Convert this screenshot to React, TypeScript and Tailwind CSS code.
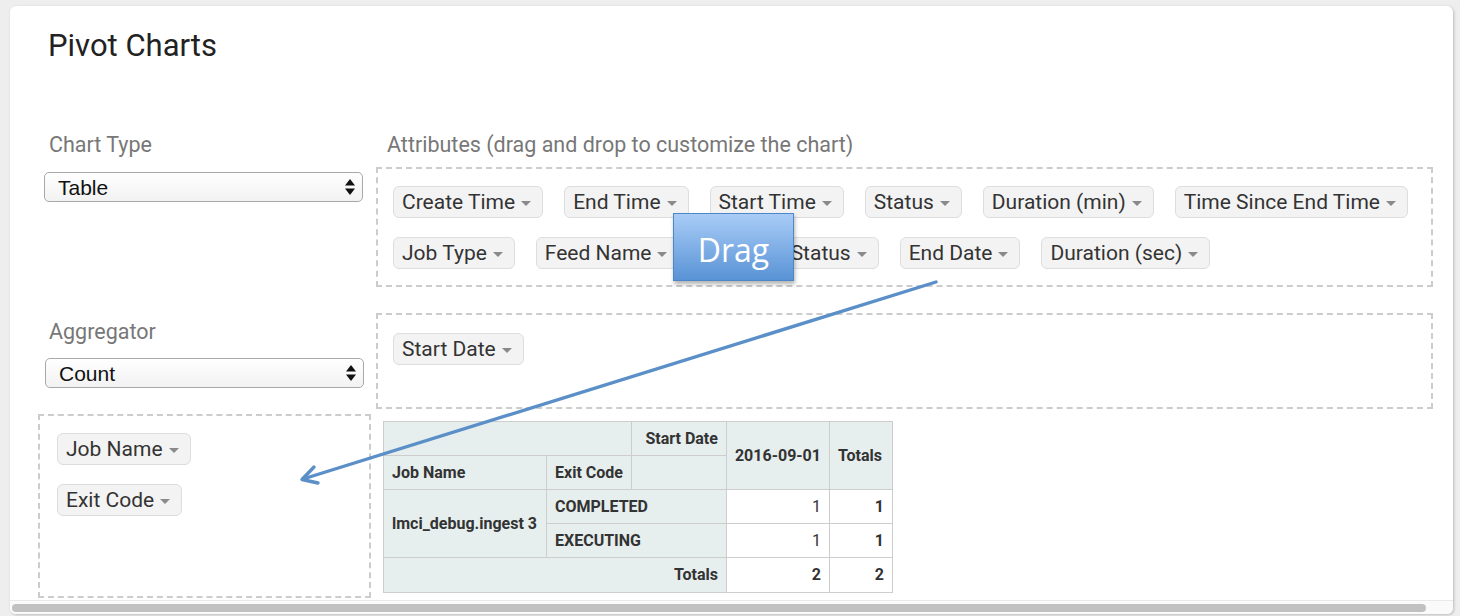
import React from "react";

const font = { fontFamily: "Roboto, 'Liberation Sans', sans-serif" };

function Chip({ label }: { label: string }) {
  return (
    <div className="flex h-[32px] shrink-0 items-center whitespace-nowrap rounded-[6px] border border-[#dddddd] bg-[#f3f3f3] pl-[8px] pr-[11px] text-[21px] leading-none text-[#333333]">
      <span>{label}</span>
      <span className="ml-[6px] mt-[2px] h-0 w-0 border-x-[5px] border-t-[5px] border-x-transparent border-t-[#8a8a8a]" />
    </div>
  );
}

function Select({ value }: { value: string }) {
  return (
    <div className="flex h-[30px] items-center justify-between rounded-[5px] border border-[#a8a8a8] bg-gradient-to-b from-[#ffffff] to-[#f2f2f2] pl-[13px] pr-[6px] leading-none text-[#111111]">
      <span style={{ fontFamily: "'Liberation Sans', Arial, sans-serif", fontSize: "21px" }}>{value}</span>
      <svg width="12" height="18" viewBox="0 0 12 18">
        <path d="M6 1 L11 7.5 L1 7.5 Z" fill="#111" />
        <path d="M6 17 L11 10.5 L1 10.5 Z" fill="#111" />
      </svg>
    </div>
  );
}

const th = "whitespace-nowrap border border-[#cdcdcd] bg-[#e6eeee] px-[8px] font-bold text-[#333333]";
const td = "whitespace-nowrap border border-[#cdcdcd] bg-white px-[8px] text-right text-[#333333]";

export default function App() {
  return (
    <div className="relative h-[616px] w-[1460px] overflow-hidden bg-[#eeeeee] pl-[10px] pt-[6px]" style={font}>
      <div className="flex h-[608px] w-[1443px] flex-col overflow-hidden rounded-[6px] bg-white shadow-[1px_1px_3px_rgba(0,0,0,0.22)]">
        <div className="flex-1 pl-[28px] pt-[22px]">
          <h1 className="pl-[10px] text-[31px] leading-[36px] text-[#222222]">Pivot Charts</h1>

          {/* Row 1 */}
          <div className="mt-[69px] flex">
            <div className="w-[333px]">
              <div className="pl-[11px] text-[21.5px] leading-[24px] text-[#777777]">Chart Type</div>
              <div className="ml-[6px] mt-[15px] w-[319px]">
                <Select value="Table" />
              </div>
            </div>
            <div className="ml-[5px] w-[1057px]">
              <div className="pl-[11px] text-[21.5px] leading-[24px] text-[#777777]">
                Attributes (drag and drop to customize the chart)
              </div>
              <div className="mt-[10px] h-[120px] border-2 border-dashed border-[#cccccc] pl-[15px] pt-[17px]">
                <div className="flex flex-wrap gap-x-[21px] gap-y-[19px]">
                  <Chip label="Create Time" />
                  <Chip label="End Time" />
                  <Chip label="Start Time" />
                  <Chip label="Status" />
                  <Chip label="Duration (min)" />
                  <Chip label="Time Since End Time" />
                  <Chip label="Job Type" />
                  <Chip label="Feed Name" />
                  <Chip label="Process Status" />
                  <Chip label="End Date" />
                  <Chip label="Duration (sec)" />
                </div>
              </div>
            </div>
          </div>

          {/* Row 2 */}
          <div className="mt-[26px] flex">
            <div className="w-[333px]">
              <div className="mt-[7px] pl-[11px] text-[21.5px] leading-[24px] text-[#777777]">Aggregator</div>
              <div className="ml-[7px] mt-[14px] w-[319px]">
                <Select value="Count" />
              </div>
            </div>
            <div className="ml-[5px] h-[96px] w-[1057px] border-2 border-dashed border-[#cccccc] pl-[15px] pt-[18px]">
              <div className="flex">
                <Chip label="Start Date" />
              </div>
            </div>
          </div>

          {/* Row 3 */}
          <div className="mt-[5px] flex">
            <div className="h-[184px] w-[333px] border-2 border-dashed border-[#cccccc] pl-[17px] pt-[17px]">
              <div className="flex flex-col items-start gap-[19px]">
                <Chip label="Job Name" />
                <Chip label="Exit Code" />
              </div>
            </div>
            <div className="ml-[12px] mt-[7px]">
              <table className="table-fixed border-collapse text-[16px] leading-none">
                <colgroup>
                  <col className="w-[163px]" />
                  <col className="w-[84px]" />
                  <col className="w-[95px]" />
                  <col className="w-[103px]" />
                  <col className="w-[63px]" />
                </colgroup>
                <tbody>
                  <tr className="h-[34px]">
                    <th className={th} colSpan={2}></th>
                    <th className={`${th} text-right`}>Start Date</th>
                    <th className={`${th} text-left`} rowSpan={2}>2016-09-01</th>
                    <th className={`${th} text-left`} rowSpan={2}>Totals</th>
                  </tr>
                  <tr className="h-[34px]">
                    <th className={`${th} text-left`}>Job Name</th>
                    <th className={`${th} text-left`}>Exit Code</th>
                    <th className={th}></th>
                  </tr>
                  <tr className="h-[34px]">
                    <th className={`${th} text-left`} rowSpan={2}>lmci_debug.ingest 3</th>
                    <th className={`${th} text-left`} colSpan={2}>COMPLETED</th>
                    <td className={td}>1</td>
                    <td className={`${td} font-bold`}>1</td>
                  </tr>
                  <tr className="h-[34px]">
                    <th className={`${th} text-left`} colSpan={2}>EXECUTING</th>
                    <td className={td}>1</td>
                    <td className={`${td} font-bold`}>1</td>
                  </tr>
                  <tr className="h-[35px]">
                    <th className={`${th} text-right`} colSpan={3}>Totals</th>
                    <td className={`${td} font-bold`}>2</td>
                    <td className={`${td} font-bold`}>2</td>
                  </tr>
                </tbody>
              </table>
            </div>
          </div>
        </div>

        {/* horizontal scrollbar */}
        <div className="flex h-[14px] items-center border-t border-[#e9e9e9] bg-[#fafafa] pl-[2px]">
          <div className="h-[8px] w-[1414px] rounded-full bg-[#c1c1c1]" />
        </div>
      </div>

      {/* Drag ghost */}
      <div
        className="absolute left-[673px] top-[213px] flex h-[68px] w-[121px] items-center justify-center border border-[#4d86c9] bg-gradient-to-b from-[#a9ccf6] to-[#5893d6] pt-[6px] text-[32px] font-medium text-white shadow-[1px_3px_4px_rgba(0,0,0,0.3)]"
        style={{ fontFamily: "'Open Sans', 'DejaVu Sans', sans-serif" }}
      >
        Drag
      </div>

      {/* Arrow annotation */}
      <svg className="pointer-events-none absolute left-0 top-0" width="1460" height="616" viewBox="0 0 1460 616">
        <g stroke="#5b8fc8" strokeWidth="3.4" strokeLinecap="round" fill="none">
          <line x1="936" y1="282" x2="303" y2="479" />
          <path d="M314 467 L302 479.5 L318 483" strokeLinejoin="round" />
        </g>
      </svg>
    </div>
  );
}
